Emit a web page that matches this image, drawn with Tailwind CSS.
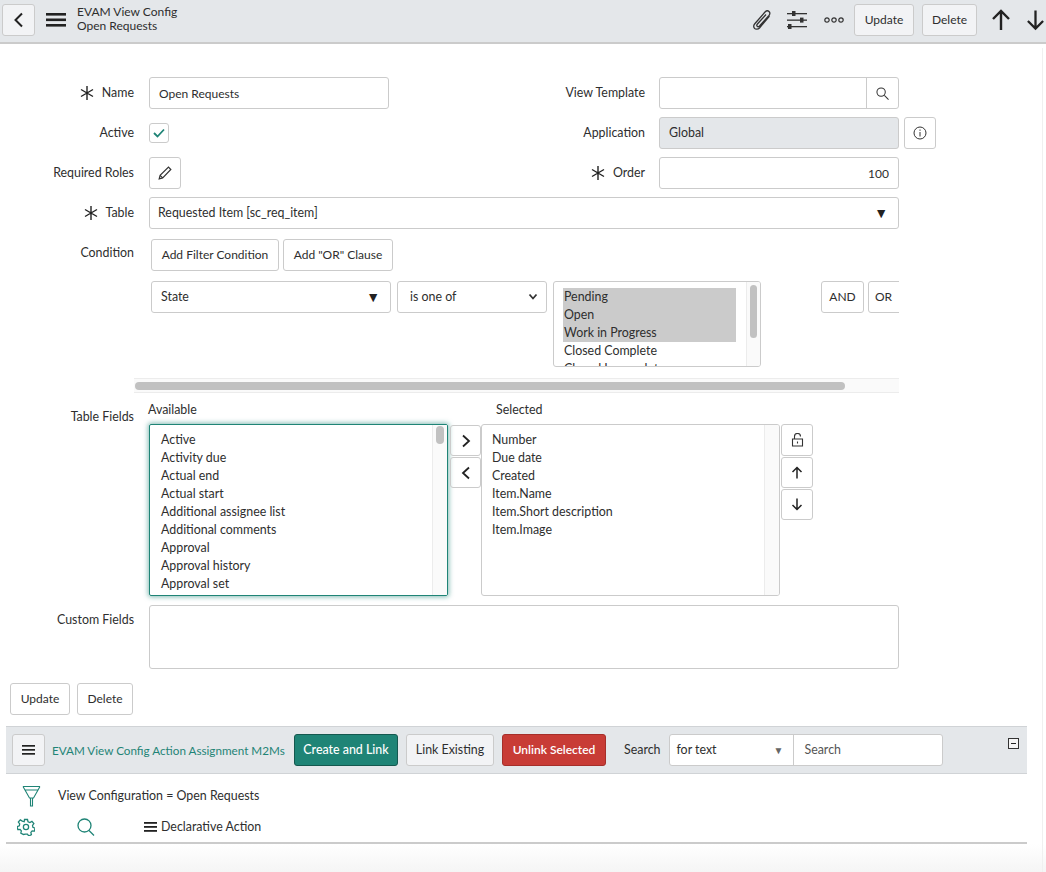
<!DOCTYPE html>
<html lang="en">
<head>
<meta charset="UTF-8">
<title>EVAM View Config - Open Requests</title>
<script src="https://cdn.jsdelivr.net/npm/@tailwindcss/browser@4"></script>
</head>
<body class="bg-white font-['Lato',sans-serif] text-[12.4px] leading-[20px] text-[#2e2e2e]">
<div class="w-[1046px] h-[872px] overflow-hidden relative flex flex-col">

  <!-- top bar -->
  <header class="h-[44px] shrink-0 bg-[#e4e7ea] border-b-2 border-[#cbcbcb] flex items-center pb-[3px]">
    <button class="ml-[2px] w-[33px] h-[32px] rounded-[3px] border border-[#cbcbcb] bg-[#f2f3f5] flex items-center justify-center">
      <svg class="w-[14px] h-[16px]" viewBox="0 0 14 16" fill="none" stroke="#222" stroke-width="2"><path d="M10 1.500 3.500 8l6.500 6.500"/></svg>
    </button>
    <svg class="ml-[11px] w-[20px] h-[16px]" viewBox="0 0 20 16" fill="#222"><rect y="1" width="20" height="2.600"/><rect y="6.500" width="20" height="2.600"/><rect y="12" width="20" height="2.600"/></svg>
    <div class="ml-[11px] leading-[14px] text-[12px] -mt-[1px]"><div>EVAM View Config</div><div>Open Requests</div></div>
    <div class="ml-auto flex items-center">
      <svg class="w-[22px] h-[22px] mr-[2px]" viewBox="0 0 22 22" fill="none" stroke="#333" stroke-width="1.300"><path d="M18.500 7 8.500 19c-1.500 1.500-4 1.500-5 .3s-1-3 .3-4.500L14 3c1.300-1.300 3-1.500 4-.5s1 2.700 0 4L8.500 17c-.8.800-1.800.8-2.300.3s-.5-1.500.2-2.300L15 5.500"/></svg>
      <svg class="ml-[12px] w-[20px] h-[20px]" viewBox="0 0 20 20" fill="#333"><rect y="3" width="20" height="1.300"/><rect x="5" y="1" width="3.500" height="5"/><rect y="9.500" width="20" height="1.300"/><rect x="13" y="7.600" width="3.500" height="5"/><rect y="16" width="20" height="1.300"/><rect x="1" y="14" width="3.500" height="5"/></svg>
      <svg class="ml-[17px] w-[20px] h-[8px]" viewBox="0 0 20 8" fill="none" stroke="#333" stroke-width="1.200"><circle cx="3" cy="4" r="2.200"/><circle cx="10" cy="4" r="2.200"/><circle cx="17" cy="4" r="2.200"/></svg>
      <button class="ml-[10px] w-[60px] h-[32px] rounded-[3px] border border-[#cbcbcb] bg-[#f2f3f5] text-[12px]">Update</button>
      <button class="ml-[8px] w-[55px] h-[32px] rounded-[3px] border border-[#cbcbcb] bg-[#f2f3f5] text-[12px]">Delete</button>
      <svg class="ml-[14px] w-[20px] h-[22px]" viewBox="0 0 20 22" fill="none" stroke="#222" stroke-width="2.400"><path d="M10 21V2M2 10l8-8 8 8"/></svg>
      <svg class="ml-[15px] mr-px w-[19px] h-[22px]" viewBox="0 0 20 22" fill="none" stroke="#222" stroke-width="2.400"><path d="M10 1v19M2 12l8 8 8-8"/></svg>
    </div>
  </header>

  <!-- form -->
  <main class="pt-[33px] flex flex-col flex-1">
    <div class="flex h-[32px] items-center">
      <label class="w-[134px] flex justify-end items-center gap-[8px]"><svg class="w-[14px] h-[14px]" viewBox="0 0 14 14" stroke="#222" stroke-width="1.400"><path d="M7 0v14M1 3.500l12 7M13 3.500l-12 7"/></svg>Name</label>
      <input class="ml-[15px] w-[240px] h-[32px] px-[9px] rounded-[3px] border border-[#cbcbcb] text-[12px]" value="Open Requests">
      <label class="w-[256px] text-right">View Template</label>
      <div class="ml-[14px] w-[240px] h-[32px] rounded-[3px] border border-[#cbcbcb] flex justify-end">
        <div class="w-[32px] border-l border-[#cbcbcb] flex items-center justify-center"><svg class="w-[13px] h-[13px]" viewBox="0 0 14 14" fill="none" stroke="#333" stroke-width="1.100"><circle cx="5.500" cy="5.500" r="4.500"/><path d="m9 9 4.500 4.500"/></svg></div>
      </div>
    </div>
    <div class="flex h-[32px] items-center mt-[8px]">
      <label class="w-[134px] text-right">Active</label>
      <div class="ml-[15px] w-[20px] h-[20px] rounded-[3px] border border-[#cbcbcb] flex items-center justify-center"><svg class="w-[14px] h-[12px]" viewBox="0 0 14 12" fill="none" stroke="#1f8476" stroke-width="1.800"><path d="m2 6 3.500 3.500L12 2.500"/></svg></div>
      <label class="ml-[220px] w-[256px] text-right">Application</label>
      <div class="ml-[14px] w-[240px] h-[32px] px-[9px] rounded-[3px] border border-[#cbcbcb] bg-[#e4e7ea] flex items-center">Global</div>
      <button class="ml-[5px] w-[32px] h-[32px] rounded-[3px] border border-[#cbcbcb] flex items-center justify-center"><svg class="w-[14px] h-[14px]" viewBox="0 0 14 14" fill="none" stroke="#333"><circle cx="7" cy="7" r="6"/><path d="M7 6v4.500M7 3.500v1.300"/></svg></button>
    </div>
    <div class="flex h-[32px] items-center mt-[8px]">
      <label class="w-[134px] text-right">Required Roles</label>
      <button class="ml-[15px] w-[32px] h-[32px] rounded-[3px] border border-[#cbcbcb] flex items-center justify-center"><svg class="w-[14px] h-[14px]" viewBox="0 0 12 12" fill="none" stroke="#333"><path d="M1 11l.8-3L9 1l2 2-7 7.200zM1.800 8 4 10.200"/></svg></button>
      <label class="ml-[208px] w-[256px] flex justify-end items-center gap-[8px]"><svg class="w-[14px] h-[14px]" viewBox="0 0 14 14" stroke="#222" stroke-width="1.400"><path d="M7 0v14M1 3.500l12 7M13 3.500l-12 7"/></svg>Order</label>
      <input class="ml-[14px] w-[240px] h-[32px] px-[9px] text-right rounded-[3px] border border-[#cbcbcb] text-[12px]" value="100">
    </div>
    <div class="flex h-[32px] items-center mt-[8px]">
      <label class="w-[134px] flex justify-end items-center gap-[8px]"><svg class="w-[14px] h-[14px]" viewBox="0 0 14 14" stroke="#222" stroke-width="1.400"><path d="M7 0v14M1 3.500l12 7M13 3.500l-12 7"/></svg>Table</label>
      <div class="ml-[15px] w-[750px] h-[32px] pl-[8px] pr-[9px] rounded-[3px] border border-[#cbcbcb] flex items-center justify-between">Requested Item [sc_req_item]<span class="text-[#222] text-[14px] pr-px">▼</span></div>
    </div>

    <div class="flex mt-[10px]">
      <label class="w-[134px] text-right pt-[4px]">Condition</label>
      <div class="ml-[17px] flex gap-[4px]">
        <button class="w-[128px] h-[32px] rounded-[3px] border border-[#cbcbcb] text-[12px]">Add Filter Condition</button>
        <button class="w-[110px] h-[32px] rounded-[3px] border border-[#cbcbcb] text-[12px]">Add "OR" Clause</button>
      </div>
    </div>

    <!-- condition row -->
    <div class="ml-[151px] w-[748px] h-[86px] mt-[10px] flex overflow-hidden shrink-0">
      <div class="shrink-0 w-[240px] h-[32px] px-[9px] rounded-[3px] border border-[#cbcbcb] flex items-center justify-between">State<span class="text-[#222] text-[14px] pr-px">▼</span></div>
      <div class="shrink-0 ml-[6px] w-[150px] h-[32px] pl-[12px] pr-[8px] rounded-[3px] border border-[#cbcbcb] flex items-center justify-between">is one of<svg class="w-[10px] h-[8px]" viewBox="0 0 10 8" fill="none" stroke="#333" stroke-width="1.800"><path d="m1.500 1.500 3.500 4 3.500-4"/></svg></div>
      <div class="shrink-0 ml-[6px] w-[208px] h-[86px] rounded-[3px] border border-[#cbcbcb] flex overflow-hidden">
        <div class="flex-1 pl-[9px] pt-[6px] pr-[10px] leading-[18px]">
          <div class="bg-[#cbcbcb] pl-px">Pending</div>
          <div class="bg-[#cbcbcb] pl-px">Open</div>
          <div class="bg-[#cbcbcb] pl-px">Work in Progress</div>
          <div class="pl-px">Closed Complete</div>
          <div class="pl-px">Closed Incomplete</div>
        </div>
        <div class="w-[14px] bg-[#fafafa] border-l border-[#ececec] pt-[3px] flex justify-center"><div class="w-[7px] h-[53px] rounded-full bg-[#c1c1c1]"></div></div>
      </div>
      <button class="ml-[60px] shrink-0 w-[43px] h-[32px] rounded-[3px] border border-[#cbcbcb] text-[12px]">AND</button>
      <button class="ml-[4px] shrink-0 w-[36px] h-[32px] rounded-[3px] border border-[#cbcbcb] pr-[5px] text-[12px]">OR</button>
    </div>
    <div class="ml-[134px] w-[765px] h-[15px] mt-[11px] bg-[#fafafa] border-y border-[#ececec] flex items-center pl-px shrink-0"><div class="w-[710px] h-[8px] rounded-full bg-[#c1c1c1]"></div></div>

    <!-- slushbucket -->
    <div class="flex mt-[9px]">
      <label class="w-[134px] text-right pt-[5px]">Table Fields</label>
      <div class="ml-[15px] w-[299px]">
        <div class="h-[22px] -ml-px -mt-[2px] mb-[2px]">Available</div>
        <div class="h-[172px] rounded-[2px] border border-[#1f8476] shadow-[0_0_5px_1px_rgba(31,132,118,0.55)] flex overflow-hidden">
          <div class="flex-1 pl-[11px] pt-[6px] leading-[18px]">
            <div>Active</div><div>Activity due</div><div>Actual end</div><div>Actual start</div><div>Additional assignee list</div><div>Additional comments</div><div>Approval</div><div>Approval history</div><div>Approval set</div>
          </div>
          <div class="w-[15px] bg-[#fafafa] border-l border-[#ececec] pt-[1px] flex justify-center"><div class="w-[8px] h-[18px] rounded-full bg-[#c1c1c1]"></div></div>
        </div>
      </div>
      <div class="ml-[2px] w-[31px] pt-[23px] flex flex-col gap-[1px]">
        <button class="h-[31px] rounded-[3px] border border-[#cbcbcb] flex items-center justify-center"><svg class="w-[12px] h-[14px]" viewBox="0 0 12 14" fill="none" stroke="#222" stroke-width="1.800"><path d="m3 1.500 6 5.500-6 5.500"/></svg></button>
        <button class="h-[31px] rounded-[3px] border border-[#cbcbcb] flex items-center justify-center"><svg class="w-[12px] h-[14px]" viewBox="0 0 12 14" fill="none" stroke="#222" stroke-width="1.800"><path d="M9 1.500 3 7l6 5.500"/></svg></button>
      </div>
      <div class="w-[299px]">
        <div class="h-[22px] pl-[15px] -mt-[2px] mb-[2px]">Selected</div>
        <div class="h-[172px] rounded-[3px] border border-[#cbcbcb] flex overflow-hidden">
          <div class="flex-1 pl-[10px] pt-[6px] leading-[18px]">
            <div>Number</div><div>Due date</div><div>Created</div><div>Item.Name</div><div>Item.Short description</div><div>Item.Image</div>
          </div>
          <div class="w-[15px] bg-[#fafafa] border-l border-[#ececec]"></div>
        </div>
      </div>
      <div class="ml-px w-[32px] pt-[22px] flex flex-col gap-[1px]">
        <button class="h-[32px] rounded-[3px] border border-[#cbcbcb] flex items-center justify-center"><svg class="w-[13px] h-[14px]" viewBox="0 0 13 14" fill="none" stroke="#333" stroke-width="1.100"><path d="M3.500 6V3.500a3 3 0 0 1 6 0M1.500 6h10v7h-10zM6.500 8.500v2"/></svg></button>
        <button class="h-[31px] rounded-[3px] border border-[#cbcbcb] flex items-center justify-center"><svg class="w-[12px] h-[13px]" viewBox="0 0 12 13" fill="none" stroke="#222" stroke-width="1.500"><path d="M6 12.500V1.500M1.500 6 6 1.500 10.500 6"/></svg></button>
        <button class="h-[31px] rounded-[3px] border border-[#cbcbcb] flex items-center justify-center"><svg class="w-[12px] h-[13px]" viewBox="0 0 12 13" fill="none" stroke="#222" stroke-width="1.500"><path d="M6 .5v11M1.500 7 6 11.500 10.500 7"/></svg></button>
      </div>
    </div>

    <div class="flex mt-[9px]">
      <label class="w-[134px] text-right pt-[5px]">Custom Fields</label>
      <div class="ml-[15px] w-[750px] h-[64px] rounded-[3px] border border-[#cbcbcb]"></div>
    </div>

    <div class="flex ml-[10px] gap-[7px] mt-[14px]">
      <button class="w-[60px] h-[32px] rounded-[3px] border border-[#cbcbcb] text-[12px]">Update</button>
      <button class="w-[56px] h-[32px] rounded-[3px] border border-[#cbcbcb] text-[12px]">Delete</button>
    </div>

    <!-- related list -->
    <section class="ml-[6px] w-[1021px] mt-[11px] h-[48px] bg-[#e4e7ea] border-y border-[#d0d3d6] flex items-center shrink-0">
      <button class="ml-[6px] w-[33px] h-[32px] rounded-[3px] border border-[#cbcbcb] bg-[#f2f3f5] flex items-center justify-center"><svg class="w-[13px] h-[10px]" viewBox="0 0 13 10" fill="#222"><rect width="13" height="1.700"/><rect y="4" width="13" height="1.700"/><rect y="8" width="13" height="1.700"/></svg></button>
      <a class="ml-[7px] w-[242px] text-[#1f8476] whitespace-nowrap text-[11.7px]">EVAM View Config Action Assignment M2Ms</a>
      <button class="w-[104px] h-[32px] rounded-[3px] border border-[#15584f] bg-[#1f8476] text-white font-medium">Create and Link</button>
      <button class="ml-[8px] w-[88px] h-[32px] rounded-[3px] border border-[#cbcbcb] bg-[#f2f3f5]">Link Existing</button>
      <button class="ml-[8px] w-[104px] h-[32px] rounded-[3px] border border-[#a52f2a] bg-[#c83c36] text-white font-semibold text-[12px]">Unlink Selected</button>
      <span class="ml-[18px]">Search</span>
      <div class="ml-[9px] w-[274px] h-[32px] -mt-[1px] rounded-[3px] border border-[#cbcbcb] bg-white flex">
        <div class="w-[124px] pl-[6px] pr-[10px] flex items-center justify-between border-r border-[#cbcbcb]">for text<span class="text-[#666] text-[10px]">▼</span></div>
        <div class="flex-1 pl-[10px] flex items-center text-[#555]">Search</div>
      </div>
      <div class="ml-auto mr-[8px] -mt-[14px] w-[11px] h-[11px] border border-[#333] bg-[#f5f5f5] flex items-center justify-center"><div class="w-[5px] h-px bg-[#222]"></div></div>
    </section>
    <div class="flex items-center h-[44px] ml-[22px] shrink-0">
      <svg class="w-[19px] h-[22px]" viewBox="0 0 19 22" fill="none" stroke="#1f8476" stroke-width="1.100"><path d="M1 1.500h17M1 1.500 7.500 13h4L18 1.500M3 5h13M8.500 13v8h2v-8"/></svg>
      <span class="ml-[17px]">View Configuration = Open Requests</span>
    </div>
    <div class="flex items-center h-[22px] ml-[17px] shrink-0 -mt-[2px]">
      <svg class="w-[18px] h-[18px]" viewBox="0 0 24 24" fill="none" stroke="#1f8476" stroke-width="1.700"><circle cx="12" cy="12" r="3.500"/><path d="M10 2h4l.7 3 2.500 1.100 2.700-1.600 2.600 3-1.800 2.500.5 2.500 2.800 1-.8 3.900-3-.2-1.700 2 .7 3-3.500 1.800-1.800-2.400h-2.600L8.600 22l-3.500-1.800.7-3-1.700-2-3 .2-.8-3.900 2.800-1 .5-2.500L1.800 5.500l2.600-3 2.700 1.600L9.600 5z"/></svg>
      <svg class="ml-[42px] w-[18px] h-[18px]" viewBox="0 0 18 18" fill="none" stroke="#1f8476" stroke-width="1.300"><circle cx="7.500" cy="7.500" r="6.500"/><path d="m12 12.500 5 5"/></svg>
      <svg class="ml-[49px] w-[13px] h-[10px]" viewBox="0 0 13 10" fill="#222"><rect width="13" height="1.800"/><rect y="4" width="13" height="1.800"/><rect y="8" width="13" height="1.800"/></svg>
      <span class="ml-[4px]">Declarative Action</span>
    </div>
    <div class="ml-[6px] w-[1021px] mt-[4px] h-[2px] bg-[#cbcbcb] shrink-0"></div>
    <div class="flex-1 bg-gradient-to-b from-white to-[#f5f5f5]"></div>
  </main>
  <div class="absolute right-[3px] top-[48px] bottom-0 w-px bg-[#f0f0f0]"></div>
</div>
</body>
</html>
